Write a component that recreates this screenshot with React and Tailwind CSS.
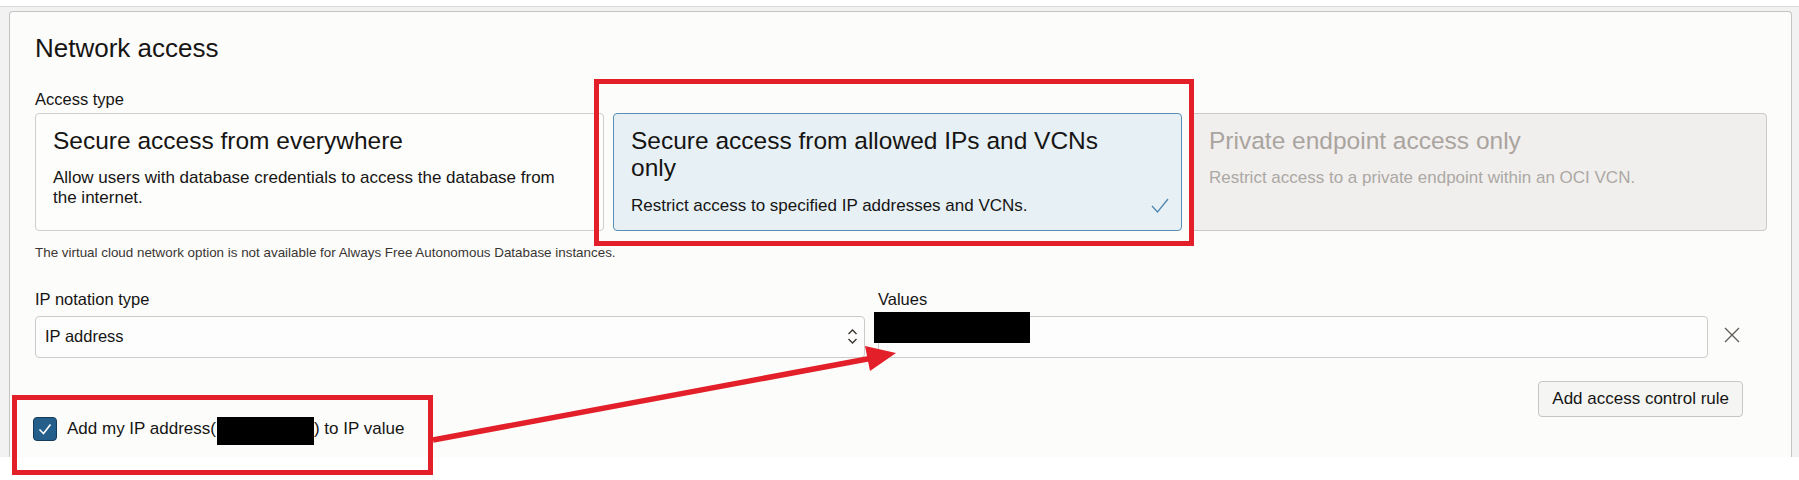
import React from 'react'

function AccessCard({ title, text, selected, disabled }) {
  const tone = selected
    ? 'border-[#5a8db5] bg-[#e7f0f5]'
    : disabled
    ? 'border-[#cbc9c6] bg-[#f0efee]'
    : 'border-[#cfcecc] bg-[#fdfdfc]'
  return (
    <div className={`relative rounded-[4px] border pl-[17px] pr-[39px] pt-[13px] ${tone}`}>
      <div className={`text-[24.5px] leading-[27.5px] ${disabled ? 'text-[#aaa49e]' : 'text-[#161513]'}`}>{title}</div>
      <div className={`mt-[14px] text-[17px] leading-[19.5px] ${disabled ? 'text-[#aca8a3]' : 'text-[#161513]'}`}>{text}</div>
      {selected && (
        <svg className="absolute bottom-[17px] right-[12px]" width="18" height="15" viewBox="0 0 18 15" fill="none">
          <polyline points="1,8 6.5,14 17,1" stroke="#4f86b0" strokeWidth="1.3" />
        </svg>
      )}
    </div>
  )
}

export default function App() {
  return (
    <div className="relative h-[480px] w-[1799px] overflow-hidden bg-white font-['Liberation_Sans',Arial,sans-serif] text-[#161513]">
      {/* page frame */}
      <div className="mt-[6px] border-t border-[#d9d9d9] bg-[#f2f2f2] pl-[9px] pr-[7px] pt-[4px]">
        <div className="h-[446px] rounded-t-[4px] border-x border-t border-[#c4c4c4] bg-[#fcfcfb] px-[25px] pt-[21px]">
          <h2 className="text-[26px] leading-[30px]">Network access</h2>

          <div className="mt-[25.6px] text-[16.5px] leading-[20px]">Access type</div>
          <div className="mt-[4.4px] grid h-[118px] grid-cols-[569px_569px_576px] gap-[9px]">
            <AccessCard
              title="Secure access from everywhere"
              text="Allow users with database credentials to access the database from the internet."
            />
            <AccessCard
              selected
              title="Secure access from allowed IPs and VCNs only"
              text="Restrict access to specified IP addresses and VCNs."
            />
            <AccessCard
              disabled
              title="Private endpoint access only"
              text="Restrict access to a private endpoint within an OCI VCN."
            />
          </div>
          <p className="mt-[14px] text-[13.4px] leading-[16px] text-[#3a3632]">
            The virtual cloud network option is not available for Always Free Autonomous Database instances.
          </p>

          {/* access rule row */}
          <div className="mt-[28px] grid w-[1708px] grid-cols-[830px_830px_1fr] gap-x-[13px]">
            <div>
              <div className="text-[16.5px] leading-[20px]">IP notation type</div>
              <div className="mt-[6.7px] flex h-[42px] items-center justify-between rounded-[4px] border border-[#cbcbcb] bg-[#fdfdfd] pl-[9px] pr-[6px] text-[16.5px]">
                <span>IP address</span>
                <svg width="11" height="17" viewBox="0 0 11 17" fill="none" stroke="#3a3632" strokeWidth="1.4">
                  <path d="M1.5 6 L5.5 2 L9.5 6" />
                  <path d="M1.5 11 L5.5 15 L9.5 11" />
                </svg>
              </div>
            </div>
            <div className="relative">
              <div className="text-[16.5px] leading-[20px]">Values</div>
              <div className="mt-[6.7px] h-[42px] rounded-[4px] border border-[#cbcbcb] bg-[#fdfdfd]" />
              <div className="absolute left-[-4px] top-[23px] h-[31px] w-[156px] bg-black" />
            </div>
            <div className="flex items-end justify-center pb-[15px]">
              <svg width="16" height="16" viewBox="0 0 16 16" stroke="#5f5b57" strokeWidth="1.3">
                <path d="M1 1 L15 15 M15 1 L1 15" />
              </svg>
            </div>
          </div>

          <div className="mt-[23px] flex w-[1708px] justify-end">
            <button className="h-[36px] rounded-[4px] border border-[#c6c6c6] bg-[#f5f5f4] px-[13px] text-[17px] text-[#161513]">
              Add access control rule
            </button>
          </div>

          <div className="-ml-[2px] flex h-[24px] items-center">
            <div className="flex h-[24px] w-[24px] items-center justify-center rounded-[4px] border border-[#143c5a] bg-[#245f8b]">
              <svg width="16" height="16" viewBox="0 0 16 16" fill="none" stroke="#fff" strokeWidth="1.6">
                <polyline points="2.5,8.5 6.5,12.5 13.5,3.5" />
              </svg>
            </div>
            <span className="ml-[10px] text-[17px]">Add my IP address(</span>
            <span className="ml-[1px] h-[28px] w-[97px] self-start bg-black" />
            <span className="text-[17px]">) to IP value</span>
          </div>
        </div>
      </div>

      {/* red annotations */}
      <div className="absolute left-[594px] top-[79px] h-[167px] w-[600px] border-[5.5px] border-[#e3202a]" />
      <div className="absolute left-[12px] top-[395px] h-[80px] w-[421px] border-[5px] border-[#e3202a]" />
      <svg className="pointer-events-none absolute left-0 top-0" width="1799" height="480">
        <line x1="433" y1="440" x2="870" y2="358.5" stroke="#e3202a" strokeWidth="5.5" />
        <polygon points="896,353 865,346 870,371" fill="#e3202a" />
      </svg>
    </div>
  )
}
